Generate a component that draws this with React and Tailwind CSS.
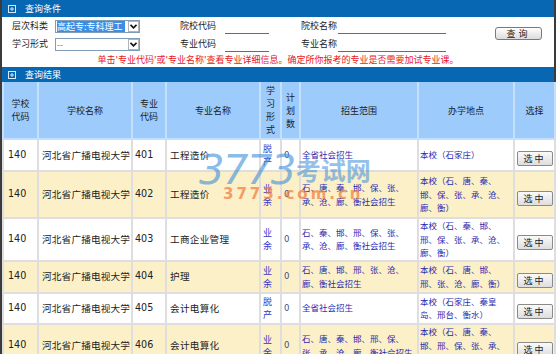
import React from 'react';

const rows = [
  { code: '401', major: '工程造价', form: '脱产', scope: '全省社会招生', site: '本校（石家庄）', h: 'h-[32px]', bg: 'bg-white' },
  { code: '402', major: '工程造价', form: '业余', scope: '石、唐、秦、邯、保、张、承、沧、廊、衡社会招生', site: '本校（石、唐、秦、邯、保、张、承、沧、廊、衡）', h: 'h-[47px]', bg: 'bg-[#fcf0c8]' },
  { code: '403', major: '工商企业管理', form: '业余', scope: '石、秦、邯、邢、保、张、承、沧、廊、衡社会招生', site: '本校（石、秦、邯、邢、保、张、承、沧、廊、衡）', h: 'h-[40px]', bg: 'bg-white' },
  { code: '404', major: '护理', form: '业余', scope: '石、唐、邯、邢、张、沧、廊、衡社会招生', site: '本校（石、唐、邯、邢、张、沧、廊、衡）', h: 'h-[32px]', bg: 'bg-[#fcf0c8]' },
  { code: '405', major: '会计电算化', form: '脱产', scope: '全省社会招生', site: '本校（石家庄、秦皇岛、邢台、衡水）', h: 'h-[31px]', bg: 'bg-white' },
  { code: '406', major: '会计电算化', form: '业余', scope: '石、唐、秦、邯、邢、保、张、承、沧、廊、衡社会招生', site: '本校（石、唐、秦、邯、邢、保、张、承、沧、廊、衡）', h: 'h-[44px]', bg: 'bg-[#fcf0c8]' },
];

const Bar = ({ title, h }) => (
  <div className={`flex ${h} items-center bg-[#0767b3] pl-[6px] text-[9px] text-white`}>
    <svg width="8" height="8" viewBox="0 0 8 8" className="mr-[9px]">
      <rect x="0.5" y="0.5" width="7" height="7" fill="none" stroke="#d6e8fa" />
      <path d="M2 4h4M4 2v4" stroke="#d6e8fa" />
    </svg>
    {title}
  </div>
);

const Select = ({ value, highlight }) => (
  <div className="flex h-[13px] w-[85px] items-center border border-[#7f9db9] bg-white">
    <div className="flex-1 pl-[1px]">
      <span
        className={`block h-[11px] text-[9px] leading-[11px] ${
          highlight ? 'w-[68px] bg-[#3a8ee6] text-white' : 'text-[#6a7fb8]'
        }`}
      >
        {value}
      </span>
    </div>
    <div className="flex h-[11px] w-[11px] items-center justify-center border border-[#b4b4b4] bg-white">
      <svg width="7" height="5" viewBox="0 0 7 5">
        <path d="M0.5 0.8L3.5 3.8L6.5 0.8" fill="none" stroke="#111" strokeWidth="1.6" />
      </svg>
    </div>
  </div>
);

const FormRow = ({ l1, sel, hl, l2, l3 }) => (
  <div className="flex h-[18px] items-center text-[9px] text-[#222]">
    <span className="w-[53px] pl-[10px]">{l1}</span>
    <Select value={sel} highlight={hl} />
    <span className="ml-[40px] w-[45px]">{l2}</span>
    <div className="mb-[1px] w-[44px] self-end border-b border-[#5c5cd6]" />
    <span className="ml-[32px] w-[37px]">{l3}</span>
    <div className="mb-[1px] w-[108px] self-end border-b border-[#5c5cd6]" />
  </div>
);

const th = 'border-2 border-t-0 border-[#c4e0fc] text-center align-middle font-normal';
const td = 'border-2 border-[#dedede] align-middle';

export default function App() {
  return (
    <div className="relative h-[354px] w-[558px] overflow-hidden bg-white font-['Noto_Sans_CJK_SC',sans-serif]">
      <div className="h-full w-[556px] border-x-2 border-[#3b3b3b]">
        <Bar title="查询条件" h="h-[17px]" />
        <div className="flex">
          <div>
            <FormRow l1="层次科类" sel="高起专:专科理工" hl l2="院校代码" l3="院校名称" />
            <FormRow l1="学习形式" sel="--" l2="专业代码" l3="专业名称" />
          </div>
          <button className="ml-[49px] mt-[10px] h-[13px] w-[47px] self-start rounded-[3px] border border-[#7a7a7a] bg-gradient-to-b from-white to-[#dcdcdc] text-[9px] leading-[11px] tracking-[3px] text-[#222]">
            查询
          </button>
        </div>
        <div className="flex h-[14px] items-center justify-center text-[9px] text-[#e8141b]">
          单击'专业代码'或'专业名称'查看专业详细信息。确定所你报考的专业是否需要加试专业课。
        </div>
        <Bar title="查询结果" h="h-[15px]" />
        <table className="w-[552px] table-fixed border-collapse">
          <colgroup>
            <col className="w-[35px]" />
            <col className="w-[94px]" />
            <col className="w-[34px]" />
            <col className="w-[94px]" />
            <col className="w-[21px]" />
            <col className="w-[19px]" />
            <col className="w-[118px]" />
            <col className="w-[96px]" />
            <col className="w-[41px]" />
          </colgroup>
          <thead>
            <tr className="h-[57px] bg-[#9ccbfc] text-[9px] leading-[13px] text-[#222]">
              <th className={th}>学校<br />代码</th>
              <th className={th}>学校名称</th>
              <th className={th}>专业<br />代码</th>
              <th className={th}>专业名称</th>
              <th className={th}>学<br />习<br />形<br />式</th>
              <th className={th}>计<br />划<br />数</th>
              <th className={th}>招生范围</th>
              <th className={th}>办学地点</th>
              <th className={th}>选择</th>
            </tr>
          </thead>
          <tbody>
            {rows.map((r) => (
              <tr key={r.code} className={`${r.h} ${r.bg}`}>
                <td className={`${td} pl-[4px] font-['DejaVu_Sans','Noto_Sans_CJK_SC',sans-serif] text-[9.6px] text-[#222]`}>140</td>
                <td className={`${td} whitespace-nowrap pl-[3px] text-[9.6px] tracking-[0.2px] text-[#222]`}>河北省广播电视大学</td>
                <td className={`${td} pl-[2px] font-['DejaVu_Sans',sans-serif] text-[9.6px] text-[#222]`}>{r.code}</td>
                <td className={`${td} pl-[3px] text-[9.6px] tracking-[0.3px] text-[#222]`}>{r.major}</td>
                <td className={`${td} pl-[2px] text-[9px] leading-[13px] text-[#3535c8]`}>
                  <span className="block w-[10px] break-all">{r.form}</span>
                </td>
                <td className={`${td} pl-[2px] font-['DejaVu_Sans',sans-serif] text-[8.5px] text-[#3d4f8a]`}>0</td>
                <td className={`${td} pl-[1px] pr-[2px] text-[8.5px] leading-[13.5px] text-[#2b2bb0]`}>{r.scope}</td>
                <td className={`${td} pl-[1px] pr-[2px] text-[8.5px] leading-[13.5px] text-[#2b2bb0]`}>{r.site}</td>
                <td className={`${td} text-center`}>
                  <button className="h-[15px] w-[36px] rounded-[2px] border border-[#8a8a8a] bg-gradient-to-b from-[#fafafa] to-[#dedede] text-[9px] leading-[13px] tracking-[2px] text-[#222]">
                    选中
                  </button>
                </td>
              </tr>
            ))}
          </tbody>
        </table>
      </div>
      {/* watermark */}
      <div className="pointer-events-none absolute left-[199px] top-[150px] select-none">
        <div className="flex items-start">
          <span className="font-['DejaVu_Sans',sans-serif] text-[40px] italic leading-[40px] tracking-[-1.5px] text-[#3f8fd8] opacity-60">3773</span>
          <span className="ml-[1px] mt-[6px] text-[25px] font-bold leading-[27px] text-[#3f8fd8] opacity-55">考试网</span>
        </div>
        <div className="-mt-[4px] ml-[24px] font-['DejaVu_Sans',sans-serif] text-[15px] font-bold leading-[16px] tracking-[3px] text-[#f07a3a] opacity-70">
          3773.com.cn
        </div>
      </div>
    </div>
  );
}
